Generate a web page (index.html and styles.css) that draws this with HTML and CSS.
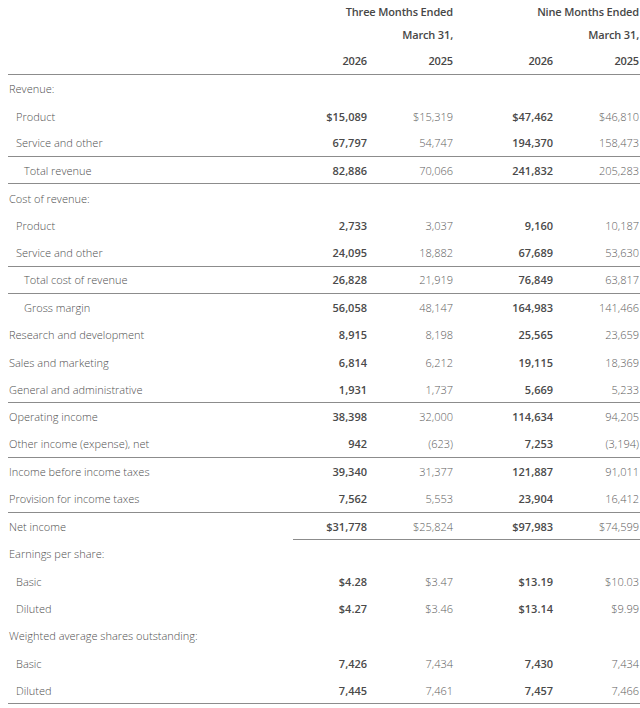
FILE: index.html
```html
<!DOCTYPE html>
<html lang="en">
<head>
<meta charset="UTF-8" />
<meta name="viewport" content="width=device-width, initial-scale=1" />
<title>Income Statements</title>
<link rel="stylesheet" href="styles.css">
</head>
<body>
  <div class="statement">
    <div class="row head head-1">
      <span></span>
      <span class="span2">Three Months Ended</span>
      <span class="span2">Nine Months Ended</span>
    </div>
    <div class="row head head-2">
      <span></span>
      <span class="span2">March 31,</span>
      <span class="span2">March 31,</span>
    </div>
    <div class="row head head-3">
      <span></span>
      <span>2026</span>
      <span>2025</span>
      <span>2026</span>
      <span>2025</span>
    </div>

    <div class="row"><span class="lvl0">Revenue:</span></div>
    <div class="row"><span class="lvl1">Product</span><b>$15,089</b><span>$15,319</span><b>$47,462</b><span>$46,810</span></div>
    <div class="row rule"><span class="lvl1">Service and other</span><b>67,797</b><span>54,747</span><b>194,370</b><span>158,473</span></div>
    <div class="row rule"><span class="lvl2">Total revenue</span><b>82,886</b><span>70,066</span><b>241,832</b><span>205,283</span></div>
    <div class="row"><span class="lvl0">Cost of revenue:</span></div>
    <div class="row"><span class="lvl1">Product</span><b>2,733</b><span>3,037</span><b>9,160</b><span>10,187</span></div>
    <div class="row rule"><span class="lvl1">Service and other</span><b>24,095</b><span>18,882</span><b>67,689</b><span>53,630</span></div>
    <div class="row rule"><span class="lvl2">Total cost of revenue</span><b>26,828</b><span>21,919</span><b>76,849</b><span>63,817</span></div>
    <div class="row"><span class="lvl2">Gross margin</span><b>56,058</b><span>48,147</span><b>164,983</b><span>141,466</span></div>
    <div class="row"><span class="lvl0">Research and development</span><b>8,915</b><span>8,198</span><b>25,565</b><span>23,659</span></div>
    <div class="row"><span class="lvl0">Sales and marketing</span><b>6,814</b><span>6,212</span><b>19,115</b><span>18,369</span></div>
    <div class="row rule"><span class="lvl0">General and administrative</span><b>1,931</b><span>1,737</span><b>5,669</b><span>5,233</span></div>
    <div class="row"><span class="lvl0">Operating income</span><b>38,398</b><span>32,000</span><b>114,634</b><span>94,205</span></div>
    <div class="row rule"><span class="lvl0">Other income (expense), net</span><b>942</b><span>(623)</span><b>7,253</b><span>(3,194)</span></div>
    <div class="row"><span class="lvl0">Income before income taxes</span><b>39,340</b><span>31,377</span><b>121,887</b><span>91,011</span></div>
    <div class="row rule"><span class="lvl0">Provision for income taxes</span><b>7,562</b><span>5,553</span><b>23,904</b><span>16,412</span></div>
    <div class="row total"><span class="lvl0">Net income</span><b>$31,778</b><span>$25,824</span><b>$97,983</b><span>$74,599</span></div>
    <div class="row"><span class="lvl0">Earnings per share:</span></div>
    <div class="row"><span class="lvl1">Basic</span><b>$4.28</b><span>$3.47</span><b>$13.19</b><span>$10.03</span></div>
    <div class="row"><span class="lvl1">Diluted</span><b>$4.27</b><span>$3.46</span><b>$13.14</b><span>$9.99</span></div>
    <div class="row"><span class="lvl0">Weighted average shares outstanding:</span></div>
    <div class="row"><span class="lvl1">Basic</span><b>7,426</b><span>7,434</span><b>7,430</b><span>7,434</span></div>
    <div class="row rule"><span class="lvl1">Diluted</span><b>7,445</b><span>7,461</span><b>7,457</b><span>7,466</span></div>
  </div>
</body>
</html>
```

FILE: styles.css
```css
body {
  margin: 0 0 0 8px;
  background-color: #fff;
  font-family: "Open Sans", "Noto Sans", Arial, sans-serif;
  font-size: 11px;
  color: #5e5e5e;
}
.statement {
  width: 632px;
}
.row {
  display: grid;
  grid-template-columns: 285px 77px 86px 100px 84px;
  align-items: center;
  height: 27.36px;
  box-sizing: border-box;
  white-space: nowrap;
}
.row > * {
  text-align: right;
  padding-right: 3px;
  font-weight: 300;
}
.row > *:nth-child(5) { padding-right: 1px; }
.row > b {
  font-weight: 600;
  color: #4a4a4a;
}

.head > * {
  font-weight: 600;
  color: #474747;
  letter-spacing: -0.15px;
}
.head > .span2 { grid-column: span 2; }
.head > .span2:last-child { padding-right: 1px; }
.head-1 { height: 23px; }
.head-2 { height: 22px; }
.head-3 {
  height: 30px;
  border-bottom: 1px solid #8c8c8c;
  padding-top: 1px;
}

.row > .lvl0,
.row > .lvl1,
.row > .lvl2 {
  text-align: left;
  color: #4f4f4f;
}
.row > .lvl0 { padding-left: 1px; }
.row > .lvl1 { padding-left: 8px; }
.row > .lvl2 { padding-left: 16px; }

.rule {
  border-bottom: 1px solid #8c8c8c;
}
.total {
  background: linear-gradient(#8c8c8c, #8c8c8c) 285px 100% / 347px 1px no-repeat;
}
```
